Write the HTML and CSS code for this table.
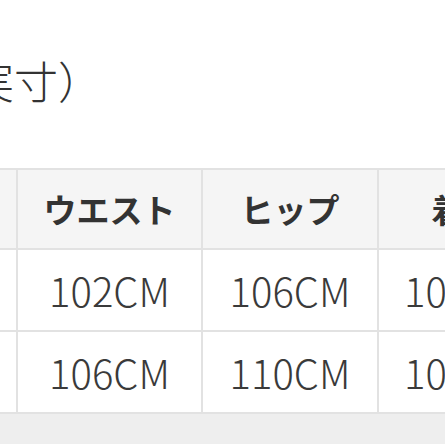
FILE: index.html
```html
<!DOCTYPE html>
<html lang="ja">
<head>
<meta charset="utf-8">
<link rel="stylesheet" href="styles.css">
</head>
<body>
<div class="page">
  <div class="title">実寸）</div>
  <table class="size">
    <colgroup>
      <col class="c1"><col class="c2"><col class="c3"><col class="c4">
    </colgroup>
    <tr class="head">
      <th>サイズ</th><th>ウエスト</th><th>ヒップ</th><th>着丈</th>
    </tr>
    <tr>
      <td>M</td><td>102CM</td><td>106CM</td><td>104CM</td>
    </tr>
    <tr>
      <td>L</td><td>106CM</td><td>110CM</td><td>105CM</td>
    </tr>
    <tr class="gray">
      <td></td><td></td><td></td><td></td>
    </tr>
  </table>
</div>
</body>
</html>
```
FILE: styles.css
```css
html, body {
  margin: 0;
  padding: 0;
  background: #ffffff;
}
.page {
  width: 445px;
  height: 445px;
  overflow: hidden;
  font-family: "Noto Sans CJK JP", "Noto Sans", sans-serif;
  color: #333333;
}
.title {
  font-size: 44px;
  font-weight: 300;
  line-height: 1;
  padding-top: 58px;
  margin-left: -30px;
  white-space: nowrap;
  height: 110px;
  box-sizing: border-box;
}
.size {
  margin-top: 58px;
  margin-left: -170px;
  border-collapse: collapse;
  table-layout: fixed;
  width: 720px;
}
.c1 { width: 186px; }
.c2 { width: 185px; }
.c3 { width: 176px; }
.c4 { width: 173px; }
.size th,
.size td {
  border: 2px solid #e2e2e2;
  text-align: center;
  vertical-align: middle;
  padding: 0;
  white-space: nowrap;
  overflow: hidden;
}
.size th {
  background: #f5f5f5;
  font-size: 33px;
  font-weight: 700;
  height: 78px;
}
.size td {
  font-size: 40px;
  font-weight: 300;
  color: #3a3a3a;
  height: 80px;
}
.size .gray td {
  background: #eeeeee;
  border-left-color: #eeeeee;
  border-right-color: #eeeeee;
  border-bottom-color: #eeeeee;
  height: 28px;
}
```
